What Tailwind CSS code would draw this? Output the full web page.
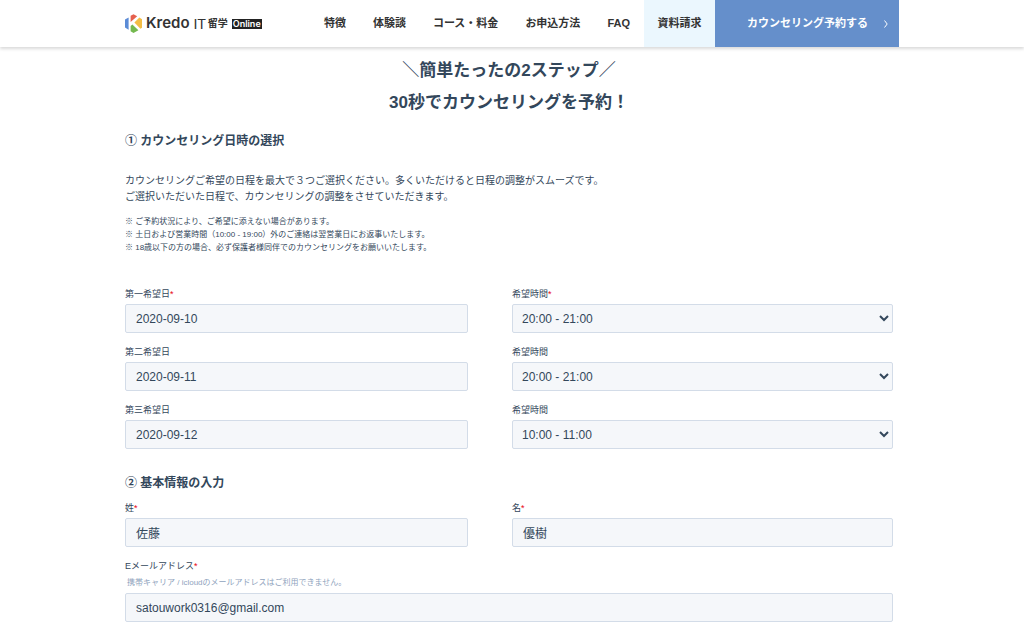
<!DOCTYPE html>
<html lang="ja">
<head>
    <meta charset="UTF-8" />
    <meta name="viewport" content="width=device-width, initial-scale=1" />
    <title>カウンセリング予約 | Kredo IT留学</title>
    <script src="https://cdn.jsdelivr.net/npm/@tailwindcss/browser@4"></script>
</head>
<body class="bg-white text-[#33475b] font-['Liberation_Sans','Noto_Sans_CJK_JP',sans-serif]">
    <header class="bg-white shadow-[0_2px_3px_rgba(0,0,0,0.15)]">
        <div class="max-w-[774px] h-[47px] mx-auto flex items-stretch justify-between text-[11px] font-bold text-[#333]">
            <a href="#" class="flex items-center gap-1">
                <svg class="w-[17px] h-[19px]" viewBox="0 0 17 19" aria-hidden="true">
                    <path d="M0 5.6 L3.6 3.4 V15.8 L0 13.6 Z" fill="#5b8bd6" />
                    <path d="M5.6 1.8 L8.5 0.2 L12.2 2.2 L5.6 8 Z" fill="#e5604e" />
                    <path d="M14.4 3.6 L17 5.2 V13.8 L15.4 14.8 L9.4 8.4 Z" fill="#f3bd45" />
                    <path d="M7.4 10.4 L13.4 16.2 L8.5 19 L5.6 17.2 V12 Z" fill="#74b94f" />
                </svg>
                <span class="font-['Inter',sans-serif] text-[15px] font-semibold">Kredo</span>
                <span class="flex items-center gap-0.5">
                    <span class="font-['Lato',sans-serif] text-[14px] font-normal">IT</span>
                    <span class="text-[10px] font-bold">留学</span>
                </span>
                <span class="bg-[#222] text-white text-[9px] leading-[10px] px-px font-['Inter',sans-serif] font-semibold">Online</span>
            </a>
            <nav class="flex items-stretch">
                <div class="flex items-center gap-[27px] pr-3.5">
                    <a href="#">特徴</a>
                    <a href="#">体験談</a>
                    <a href="#">コース・料金</a>
                    <a href="#">お申込方法</a>
                    <a href="#">FAQ</a>
                </div>
                <a href="#" class="w-[71px] flex items-center justify-center bg-[#ebf7fe]">資料請求</a>
                <a href="#" class="w-[184px] flex items-center justify-between pl-8 pr-[11px] bg-[#658fcb] text-white">
                    カウンセリング予約する
                    <svg class="w-1 h-2" viewBox="0 0 4 8" fill="none" stroke="currentColor" aria-hidden="true"><path d="M0.5 0.5 L3.2 4 L0.5 7.5" /></svg>
                </a>
            </nav>
        </div>
    </header>

    <main class="max-w-[774px] mx-auto pr-1.5 pt-2 pb-4">
        <h1 class="text-center text-[17px] leading-8 font-bold">＼簡単たったの2ステップ／<br />30秒でカウンセリングを予約！</h1>

        <form action="#" method="POST">
            <h2 class="mt-3 text-[12px] leading-5 font-bold">① カウンセリング日時の選択</h2>
            <p class="mt-[22px] text-[10px] leading-4">カウンセリングご希望の日程を最大で３つご選択ください。多くいただけると日程の調整がスムーズです。<br />ご選択いただいた日程で、カウンセリングの調整をさせていただきます。</p>
            <p class="mt-2.5 text-[8px] leading-[13px]">※ ご予約状況により、ご希望に添えない場合があります。<br />※ 土日および営業時間（10:00 - 19:00）外のご連絡は翌営業日にお返事いたします。<br />※ 18歳以下の方の場合、必ず保護者様同伴でのカウンセリングをお願いいたします。</p>

            <div class="mt-[33px] grid grid-cols-[343fr_381fr] gap-x-11 gap-y-3">
                <div class="flex flex-col gap-[3px]">
                    <label for="date1" class="text-[9px] leading-[14px]">第一希望日<span class="text-red-600">*</span></label>
                    <input type="text" id="date1" name="date1" value="2020-09-10" required class="w-full h-[29px] px-2.5 text-[12px] bg-[#f5f7fa] border border-[#d3dce8] rounded-[2px]" />
                </div>
                <div class="flex flex-col gap-[3px]">
                    <label for="time1" class="text-[9px] leading-[14px]">希望時間<span class="text-red-600">*</span></label>
                    <select id="time1" name="time1" required class="w-full h-[29px] pl-[5px] text-[12px] bg-[#f5f7fa] border border-[#d3dce8] rounded-[2px]">
                        <option>10:00 - 11:00</option>
                        <option selected>20:00 - 21:00</option>
                    </select>
                </div>
                <div class="flex flex-col gap-[3px]">
                    <label for="date2" class="text-[9px] leading-[14px]">第二希望日</label>
                    <input type="text" id="date2" name="date2" value="2020-09-11" class="w-full h-[29px] px-2.5 text-[12px] bg-[#f5f7fa] border border-[#d3dce8] rounded-[2px]" />
                </div>
                <div class="flex flex-col gap-[3px]">
                    <label for="time2" class="text-[9px] leading-[14px]">希望時間</label>
                    <select id="time2" name="time2" class="w-full h-[29px] pl-[5px] text-[12px] bg-[#f5f7fa] border border-[#d3dce8] rounded-[2px]">
                        <option>10:00 - 11:00</option>
                        <option selected>20:00 - 21:00</option>
                    </select>
                </div>
                <div class="flex flex-col gap-[3px]">
                    <label for="date3" class="text-[9px] leading-[14px]">第三希望日</label>
                    <input type="text" id="date3" name="date3" value="2020-09-12" class="w-full h-[29px] px-2.5 text-[12px] bg-[#f5f7fa] border border-[#d3dce8] rounded-[2px]" />
                </div>
                <div class="flex flex-col gap-[3px]">
                    <label for="time3" class="text-[9px] leading-[14px]">希望時間</label>
                    <select id="time3" name="time3" class="w-full h-[29px] pl-[5px] text-[12px] bg-[#f5f7fa] border border-[#d3dce8] rounded-[2px]">
                        <option selected>10:00 - 11:00</option>
                        <option>20:00 - 21:00</option>
                    </select>
                </div>
            </div>

            <h2 class="mt-6 text-[12px] leading-5 font-bold">② 基本情報の入力</h2>
            <div class="mt-2 grid grid-cols-[343fr_381fr] gap-x-11 gap-y-3">
                <div class="flex flex-col gap-[3px]">
                    <label for="lastname" class="text-[9px] leading-[14px]">姓<span class="text-red-600">*</span></label>
                    <input type="text" id="lastname" name="lastname" value="佐藤" required class="w-full h-[29px] px-2.5 text-[12px] bg-[#f5f7fa] border border-[#d3dce8] rounded-[2px]" />
                </div>
                <div class="flex flex-col gap-[3px]">
                    <label for="firstname" class="text-[9px] leading-[14px]">名<span class="text-red-600">*</span></label>
                    <input type="text" id="firstname" name="firstname" value="優樹" required class="w-full h-[29px] px-2.5 text-[12px] bg-[#f5f7fa] border border-[#d3dce8] rounded-[2px]" />
                </div>
                <div class="col-span-2 flex flex-col gap-[3px]">
                    <label for="email" class="text-[9px] leading-[14px]">Eメールアドレス<span class="text-red-600">*</span></label>
                    <p id="emailHelp" class="pl-0.5 text-[8px] leading-[14px] text-[#8fa3bd]">携帯キャリア / icloudのメールアドレスはご利用できません。</p>
                    <input type="email" id="email" name="email" value="satouwork0316@gmail.com" required aria-describedby="emailHelp" class="w-full h-[29px] px-2.5 text-[12px] bg-[#f5f7fa] border border-[#d3dce8] rounded-[2px]" />
                </div>
            </div>
        </form>
    </main>
</body>
</html>
